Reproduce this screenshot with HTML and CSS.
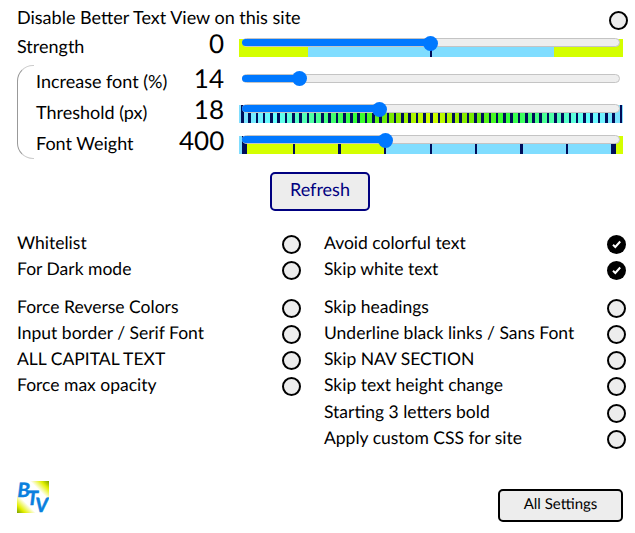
FILE: index.html
```html
<!DOCTYPE html>
<html lang="en">
<head>
<meta charset="utf-8">
<title>Better Text View</title>
<link rel="stylesheet" href="styles.css">
</head>
<body>
<main class="popup">
  <label class="row disable"><span>Disable Better Text View on this site</span><i class="check"></i></label>
  <section class="sliders">
    <div class="slider strength"><span class="name">Strength</span><output>0</output><div class="scale scale-strength"><div class="track"><div class="fill" style="width:189px"></div></div></div></div>
    <div class="group">
      <div class="slider"><span class="name">Increase font (%)</span><output>14</output><div class="scale"><div class="track"><div class="fill" style="width:58px"></div></div></div></div>
      <div class="slider"><span class="name">Threshold (px)</span><output>18</output><div class="scale scale-threshold"><div class="track"><div class="fill" style="width:138px"></div></div></div></div>
      <div class="slider"><span class="name">Font Weight</span><output>400</output><div class="scale scale-weight"><div class="track"><div class="fill" style="width:144px"></div></div></div></div>
    </div>
  </section>
  <button class="refresh">Refresh</button>
  <section class="options">
    <div class="column">
      <label class="row"><span>Whitelist</span><i class="check"></i></label>
      <label class="row"><span>For Dark mode</span><i class="check"></i></label>
      <label class="row spaced"><span>Force Reverse Colors</span><i class="check"></i></label>
      <label class="row"><span>Input border / Serif Font</span><i class="check"></i></label>
      <label class="row"><span>ALL CAPITAL TEXT</span><i class="check"></i></label>
      <label class="row"><span>Force max opacity</span><i class="check"></i></label>
    </div>
    <div class="column">
      <label class="row"><span>Avoid colorful text</span><i class="check on"><svg viewBox="0 0 19 19"><path d="M6 9.8l2.3 2.2 4.9-5.5"/></svg></i></label>
      <label class="row"><span>Skip white text</span><i class="check on"><svg viewBox="0 0 19 19"><path d="M6 9.8l2.3 2.2 4.9-5.5"/></svg></i></label>
      <label class="row spaced"><span>Skip headings</span><i class="check"></i></label>
      <label class="row"><span>Underline black links / Sans Font</span><i class="check"></i></label>
      <label class="row"><span>Skip NAV SECTION</span><i class="check"></i></label>
      <label class="row"><span>Skip text height change</span><i class="check"></i></label>
      <label class="row late"><span>Starting 3 letters bold</span><i class="check"></i></label>
      <label class="row"><span>Apply custom CSS for site</span><i class="check"></i></label>
    </div>
  </section>
  <footer>
    <svg class="logo" viewBox="0 0 32 32"><text x="0.5" y="15.5">B</text><text x="10" y="23.5">T</text><text x="18" y="30.5">V</text></svg>
    <button class="settings">All Settings</button>
  </footer>
</main>
</body>
</html>
```
FILE: styles.css
```css
* { box-sizing: border-box; }
body {
  margin: 0;
  background: #fff;
  color: #000;
  font: 17.5px/26px Lato, Carlito, sans-serif;
  text-rendering: geometricPrecision;
}
.popup { width: 635px; height: 533px; overflow: hidden; padding: 6px 0 0 17px; }
.row { display: flex; justify-content: space-between; height: 26px; }
.row span { margin-top: -1px; }
.disable { width: 611px; height: 28px; font-size: 18px; }
.disable span { margin-top: -2px; }
.disable .check { margin-top: 5px; }
.check {
  width: 19px;
  height: 19px;
  margin-top: 4px;
  border: 2px solid #000;
  border-radius: 50%;
  background: #ededed;
}
.on { border: 0; background: #000; }
.on svg { display: block; fill: none; stroke: #fff; stroke-width: 2; }
.slider { display: grid; grid-template-columns: 143px 45px 384px; height: 31px; font-size: 18px; }
.slider .name { margin-top: -1px; }
.strength { grid-template-columns: 162px 45px 384px; }
output { margin-top: -1px; font-size: 26px; text-align: right; line-height: 20px; }
.scale { width: 384px; height: 18px; margin: 5px 0 0 15px; padding: 0 3px; }
.track {
  width: 378px;
  height: 9px;
  margin-top: -1px;
  border: 1px solid #c4c4c4;
  border-radius: 5px;
  background: #eee;
}
.group .slider:first-child .track { margin-top: 0; }
.fill { position: relative; height: 7px; margin-left: -1px; border-radius: 4px; background: #0078ff; }
.fill::after {
  content: "";
  position: absolute;
  top: -3px;
  right: -7px;
  width: 15px;
  height: 15px;
  border-radius: 50%;
  background: #0078ff;
}
.group .slider:first-child .fill::after { top: -4px; }
.group {
  position: relative;
  height: 93px;
  padding: 4px 0 0 19px;
}
.group::before {
  content: "";
  position: absolute;
  left: 0;
  top: 0;
  width: 16px;
  height: 92px;
  border: 1px solid #999;
  border-right: 0;
  border-top-color: #ccc;
  border-bottom-color: #ccc;
  border-radius: 16px 0 0 16px;
}
.scale-strength {
  background: linear-gradient(90deg, #d4ff00 69px, #80ddff 69px 191px, #000d59 191px 193px, #80ddff 193px 315px, #d4ff00 315px);
}
.scale-threshold {
  background:
    repeating-linear-gradient(90deg, #000d59 0 2.6px, transparent 2.6px 7.28px) 2px 0 / 381px 18px no-repeat,
    linear-gradient(90deg, #80ddff, #6ff 9%, #3f3 31%, #7de800 40%, #d4ff00 50%, #7de800 60%, #3f3 69%, #6ff 91%, #80ddff);
}
.scale-weight {
  background: linear-gradient(90deg,
    #80ddff 3px, #000d59 3px 8px, #d4ff00 8px 54px, #000d59 54px 56px, #d4ff00 56px 99px, #000d59 99px 102px,
    #d4ff00 102px 145px, #000d59 145px 147px, #80ddff 147px 191px, #000d59 191px 193px, #80ddff 193px 236px,
    #000d59 236px 238px, #80ddff 238px 281px, #000d59 281px 284px, #80ddff 284px 327px, #000d59 327px 329px,
    #80ddff 329px 372px, #000d59 372px 377px, #d4ff00 377px);
}
button { border: 2px solid #000; border-radius: 5px; background: #ededed; color: #000; font-family: inherit; padding: 0; text-rendering: inherit; }
.refresh {
  display: block;
  width: 100px;
  height: 39px;
  margin: 14px 0 0 253px;
  border-color: #000080;
  color: #000080;
  font-size: 18px;
  line-height: 31px;
  padding-bottom: 4px;
}
.options { display: grid; grid-template-columns: 284px 302px; column-gap: 23px; margin-top: 20px; }
.spaced { margin-top: 12px; }
.late { margin-top: 1px; }
footer { display: flex; justify-content: space-between; width: 606px; margin-top: 29px; }
.logo {
  width: 32px;
  height: 32px;
  background: linear-gradient(45deg, #78a000 0, #e4f000 13%, #fff 30% 70%, #e4f000 87%, #78a000 100%);
  fill: #0a80de;
  stroke: #0a80de;
  stroke-width: .4;
  font: italic bold 22px Carlito, Lato, sans-serif;
}
.settings { width: 125px; height: 33px; margin-top: 8px; font-size: 15px; line-height: 26px; padding-bottom: 3px; }
```
